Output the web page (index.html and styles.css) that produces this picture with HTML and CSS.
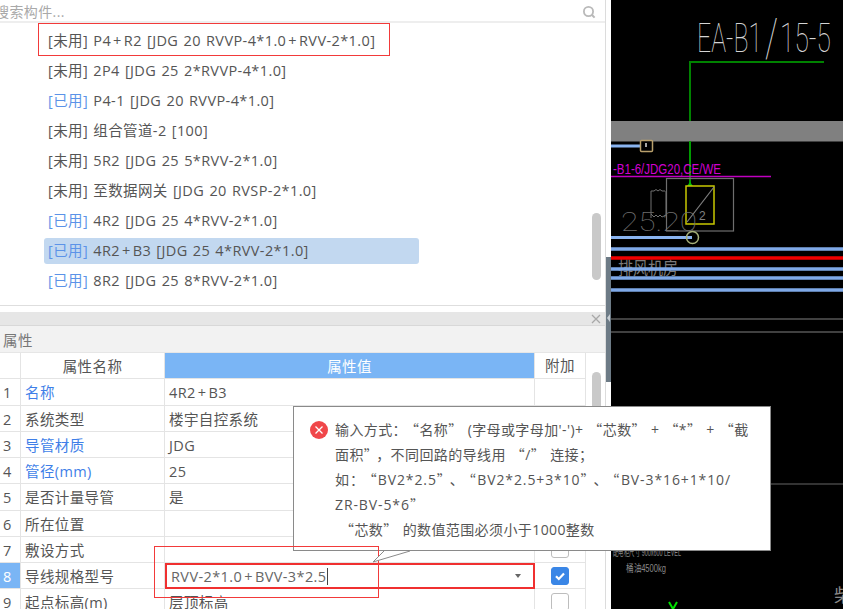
FILE: index.html
```html
<!DOCTYPE html>
<html lang="zh-CN">
<head>
<meta charset="utf-8">
<title>属性</title>
<link rel="stylesheet" href="styles.css">
</head>
<body>
<div class="app">
  <div class="left">
    <div class="main">
      <div class="upper">
        <div class="search">
          <span class="search-text">搜索构件...</span>
          <svg class="search-icon" width="14" height="14" viewBox="0 0 14 14"><circle cx="6.5" cy="6.5" r="4.6" fill="none" stroke="#b9b9b9" stroke-width="1.8"/><path d="M10 10l2.6 2.6" stroke="#b9b9b9" stroke-width="2" fill="none"/></svg>
        </div>
        <div class="list-wrap">
          <ul class="list">
            <li class="item"><span>[未用]</span> P4<span class="p">+</span>R2 [JDG 20 RVVP-4*1.0<span class="p">+</span>RVV-2*1.0]</li>
            <li class="item"><span>[未用]</span> 2P4 [JDG 25 2*RVVP-4*1.0]</li>
            <li class="item"><span class="used">[已用]</span> P4-1 [JDG 20 RVVP-4*1.0]</li>
            <li class="item"><span>[未用]</span> 组合管道-2 [100]</li>
            <li class="item"><span>[未用]</span> 5R2 [JDG 25 5*RVV-2*1.0]</li>
            <li class="item"><span>[未用]</span> 至数据网关 [JDG 20 RVSP-2*1.0]</li>
            <li class="item"><span class="used">[已用]</span> 4R2 [JDG 25 4*RVV-2*1.0]</li>
            <li class="item selected"><span class="used">[已用]</span> 4R2<span class="p">+</span>B3 [JDG 25 4*RVV-2*1.0]</li>
            <li class="item"><span class="used">[已用]</span> 8R2 [JDG 25 8*RVV-2*1.0]</li>
          </ul>
          <div class="thumb list-thumb"></div>
        </div>
      </div>
      <div class="gap"></div>
      <div class="panel-head">
        <svg class="close" width="10" height="10" viewBox="0 0 10 10"><path d="M1 1l8 8M9 1l-8 8" stroke="#a8a8a8" stroke-width="1.3" fill="none"/></svg>
      </div>
      <div class="panel-title">属性</div>
      <div class="grid-wrap">
        <div class="grid">
          <div class="row head"><div class="c idx"></div><div class="c name center">属性名称</div><div class="c val hl center">属性值</div><div class="c add">附加</div></div>
          <div class="row"><div class="c idx">1</div><div class="c name link">名称</div><div class="c val">4R2<span class="p">+</span>B3</div><div class="c add"></div></div>
          <div class="row"><div class="c idx">2</div><div class="c name">系统类型</div><div class="c val">楼宇自控系统</div><div class="c add"></div></div>
          <div class="row"><div class="c idx">3</div><div class="c name link">导管材质</div><div class="c val">JDG</div><div class="c add"></div></div>
          <div class="row"><div class="c idx">4</div><div class="c name link">管径(mm)</div><div class="c val">25</div><div class="c add"></div></div>
          <div class="row"><div class="c idx">5</div><div class="c name">是否计量导管</div><div class="c val">是</div><div class="c add"></div></div>
          <div class="row"><div class="c idx">6</div><div class="c name">所在位置</div><div class="c val"></div><div class="c add"></div></div>
          <div class="row"><div class="c idx">7</div><div class="c name">敷设方式</div><div class="c val"></div><div class="c add"><i class="check"></i></div></div>
          <div class="row"><div class="c idx hl">8</div><div class="c name">导线规格型号</div><div class="c val editing"><span class="edit-text">RVV-2*1.0<span class="p">+</span>BVV-3*2.5</span><i class="caret"></i></div><div class="c add"><i class="check on"><svg width="14" height="14" viewBox="0 0 14 14"><path d="M3 7.2l2.8 2.8L11 4.4" stroke="#fff" stroke-width="2.2" fill="none"/></svg></i></div></div>
          <div class="row"><div class="c idx">9</div><div class="c name">起点标高(m)</div><div class="c val">层顶标高</div><div class="c add"><i class="check"></i></div></div>
        </div>
        <div class="thumb grid-thumb"></div>
      </div>
    </div>
    <div class="strip"></div>
  </div>
  <svg class="cad" width="232" height="609" viewBox="611 0 232 609">
    <rect x="611" y="0" width="232" height="609" fill="#000"/>
    <rect x="611" y="121" width="232" height="20.500" fill="#808080"/>
    <text class="title" x="697" y="52" textLength="65" lengthAdjust="spacingAndGlyphs">EA-B1</text>
    <text class="title slash" x="765" y="56" textLength="13" lengthAdjust="spacingAndGlyphs">/</text>
    <text class="title" x="780" y="52" textLength="51" lengthAdjust="spacingAndGlyphs">15-5</text>
    <path d="M824 62H690V121" stroke="#008200" stroke-width="2" fill="none"/>
    <path d="M690 141V183" stroke="#009a00" stroke-width="2" fill="none"/>
    <path d="M687 186l3-4 3 4z" fill="#00c000"/>
    <path d="M611 146H640" stroke="#8ab4f0" stroke-width="3"/>
    <rect x="640.500" y="140.500" width="12" height="11" rx="1" fill="#000" stroke="#b9a06c" stroke-width="1.500"/>
    <path d="M646 143v4" stroke="#ddd" stroke-width="1.500"/>
    <text class="mag" x="613" y="174" textLength="108" lengthAdjust="spacingAndGlyphs">-B1-6/JDG20,CE/WE</text>
    <path d="M611 176.500H771" stroke="#c000c0" stroke-width="1.500"/>
    <rect x="666.500" y="178.500" width="67" height="52.500" fill="none" stroke="#6e6e6e" stroke-width="1.200"/>
    <path d="M651 218V191h3l2-1.500 2 1.500 2-1.500 2 1.500 3 0M666 191V214M651 214l3 3 2-2 2 2 2-2 2 2 4-2" stroke="#707070" fill="none"/>
    <rect x="686" y="186" width="28" height="38" fill="none" stroke="#c8c800" stroke-width="1.500"/>
    <path d="M714 187L687 222" stroke="#808080" stroke-width="1.200"/>
    <text class="mini" x="699" y="220">2</text>
    <text class="dim" x="621" y="231" textLength="76" lengthAdjust="spacingAndGlyphs">25.20</text>
    <path d="M611 237.500H692" stroke="#8ab4f0" stroke-width="3"/>
    <circle cx="692.500" cy="237.500" r="6" fill="none" stroke="#a6b07a" stroke-width="1.500"/>
    <text class="room" x="618" y="275" textLength="60" lengthAdjust="spacingAndGlyphs">排风机房</text>
    <path d="M611 249H843M611 269H843M611 278H843M611 290H843" stroke="#7fa9e8" stroke-width="3.500"/>
    <path d="M611 258H843" stroke="#f00000" stroke-width="3.500"/>
    <path d="M611 319H843M611 332H843" stroke="#555" stroke-width="1.500"/>
    <path d="M771 484H843" stroke="#666" stroke-width="1"/>
    <text class="small" x="613" y="556" textLength="68" lengthAdjust="spacingAndGlyphs">配电柜尺寸 900x600 LEVEL</text>
    <text class="small" x="626" y="572" textLength="40" lengthAdjust="spacingAndGlyphs">桶油4500kg</text>
    <text class="chai" x="834" y="602">柴</text>
    <path d="M669 602l4 7 4-7" stroke="#00e000" stroke-width="2" fill="none"/>
  </svg>
</div>

<div class="mark mark-top"></div>
<div class="mark mark-input"></div>

<div class="tip">
  <svg class="tip-icon" width="20" height="20" viewBox="0 0 20 20"><circle cx="10" cy="10" r="9" fill="#f0474a"/><path d="M6.500 6.500l7 7M13.500 6.500l-7 7" stroke="#fff" stroke-width="1.300" fill="none"/></svg>
  <div class="tip-body">
    <p>输入方式：<q class="o">“</q>名称<q>”</q>(字母或字母加'-')+<q class="o">“</q>芯数<q>”</q>+<q class="o">“</q>*<q>”</q>+<q class="o">“</q>截</p>
    <p>面积<q>”</q>，不同回路的导线用<q class="o">“</q>/<q>”</q>连接；</p>
    <p class="latin">如：<q class="o">“</q>BV2*2.5<q>”</q>、<q class="o">“</q>BV2*2.5+3*10<q>”</q>、<q class="o">“</q>BV-3*16+1*10/</p>
    <p class="latin">ZR-BV-5*6<q>”</q></p>
    <p><q class="o">“</q>芯数<q>”</q>的数值范围必须小于1000整数</p>
  </div>
</div>
<svg class="tail" width="40" height="14" viewBox="0 0 40 14"><path d="M0 12L11 1H37Z" fill="#fff"/><path d="M11 1L0 12L37 1" stroke="#8a8a8a" fill="none"/></svg>
</body>
</html>
```

FILE: styles.css
```css
* { box-sizing: border-box; }
html, body { margin: 0; padding: 0; width: 843px; height: 609px; overflow: hidden; background: #fff; }
body { font-family: "Open Sans", "Noto Sans CJK SC", sans-serif; font-size: 14.5px; letter-spacing: 0.4px; word-spacing: 1px; color: #555; position: relative; }
.p { padding: 0 2px; }
.app { display: flex; height: 609px; }
.left { width: 611px; display: flex; flex: none; height: 609px; }
.main { width: 606px; flex: none; display: flex; flex-direction: column; border-right: 1px solid #dcdcdc; }
.strip { width: 5px; height: 125px; margin-top: 257px; background: #6d7b86; flex: none; position: relative; }
.strip::after { content: ""; position: absolute; left: 1px; top: 57px; border: 4px solid transparent; border-right: 3px solid #c9d0d6; border-left: 0; }
.cad { display: block; flex: none; }
.upper { height: 306px; flex: none; border-bottom: 1px solid #dedede; display: flex; flex-direction: column; }
.search { height: 23px; flex: none; border-bottom: 2px solid #eeeeee; display: flex; align-items: center; justify-content: space-between; padding-right: 9px; overflow: hidden; }
.search-text { margin-left: -5px; color: #a9a9a9; font-size: 14px; }
.search-icon { display: block; margin-top: 2px; }
.list-wrap { flex: 1; display: flex; justify-content: space-between; }
.list { list-style: none; margin: 3px 0 0 44px; padding: 0; width: 375px; }
.item { height: 30px; line-height: 26px; padding: 2px 4px; white-space: nowrap; }
.item.selected { height: 26px; margin: 2px 0; padding: 0 4px; background: #c2d8f0; border-radius: 3px; }
.used { color: #5b93e8; }
.thumb { width: 9px; background: #c9c9c9; border-radius: 5px; flex: none; margin-right: 4px; }
.list-thumb { height: 67px; margin-top: 190px; }
.gap { height: 6px; flex: none; }
.panel-head { height: 14px; flex: none; background: #e6e6e6; border-bottom: 1px solid #d8d8d8; display: flex; justify-content: flex-end; align-items: center; padding-right: 4px; }
.panel-title { height: 27px; flex: none; background: #f2f2f2; color: #777; padding-left: 3px; line-height: 29px; border-bottom: 1px solid #e6e6e6; }
.grid-wrap { flex: 1; display: flex; min-height: 0; overflow: hidden; }
.grid { width: 586px; flex: none; }
.grid-wrap .grid-thumb { height: 110px; margin: 19px 0 0 6px; }
.row { display: flex; height: 26.25px; }
.c { height: 100%; border-right: 1px solid #e4e4e4; border-bottom: 1px solid #e4e4e4; line-height: 27px; white-space: nowrap; overflow: hidden; padding-left: 4px; }
.idx { width: 21px; flex: none; padding-left: 3px; }
.name { width: 144px; flex: none; }
.val { width: 370px; flex: none; }
.add { width: 51px; flex: none; padding-left: 0; display: flex; align-items: center; justify-content: center; }
.center { text-align: center; padding-left: 0; }
.hl { background: #7ab5f5; color: #fff; }
.link { color: #3f7fe8; }
.editing { border: 2px solid #f03030; display: flex; align-items: center; justify-content: space-between; padding: 0 12px 0 4px; }
.edit-text { border-right: 1px solid #444; line-height: 17px; color: #666; padding-right: 1px; }
.caret { width: 0; height: 0; border: 3.500px solid transparent; border-top: 4px solid #666; border-bottom: 0; }
.check { width: 18px; height: 18px; border: 1px solid #bdbdbd; border-radius: 3px; background: #fff; display: block; }
.check.on { background: #3a86e6; border-color: #3a86e6; display: flex; align-items: center; justify-content: center; }
.mark { position: absolute; border: 1px solid #f23a3a; pointer-events: none; }
.mark-top { left: 38px; top: 23px; width: 352px; height: 33px; }
.mark-input { left: 154px; top: 546px; width: 225px; height: 52px; z-index: 3; }
.tip { position: absolute; left: 293px; top: 406px; width: 478px; height: 145px; background: #fff; border: 1px solid #8a8a8a; z-index: 2; display: flex; padding: 10px 0 0 15px; gap: 6px; }
.tip-icon { display: block; margin-top: 3px; flex: none; }
.tip-body { font-size: 14px; }
.tip-body p { margin: 0; height: 25px; line-height: 25px; white-space: nowrap; color: #555; }
.tip-body .latin { letter-spacing: 0.9px; }
.tip-body q { quotes: none; font-family: "Noto Sans CJK JP", sans-serif; padding-right: 5px; }
.tip-body q.o { padding: 0 0 0 5px; }
.tail { position: absolute; left: 373px; top: 550px; z-index: 4; display: block; }
.cad text { font-family: "Liberation Sans Narrow", "Liberation Sans", sans-serif; letter-spacing: 0; word-spacing: 0; }
.cad .title { font-family: Roboto, sans-serif; font-weight: 100; font-size: 40px; fill: #d4d4d4; }
.cad .slash { font-size: 54px; }
.cad .mag { font-size: 14px; fill: #d000d0; }
.cad .mini { font-size: 12px; fill: #808080; }
.cad .dim { font-size: 26px; fill: #6e6e6e; font-family: Roboto, sans-serif; font-weight: 100; }
.cad .room { font-family: "Noto Sans CJK SC", sans-serif; font-size: 18px; fill: #7a7a7a; }
.cad .small { font-size: 10px; fill: #888; }
.cad .chai { font-family: "Noto Sans CJK SC", sans-serif; font-size: 18px; fill: #888; }
```
